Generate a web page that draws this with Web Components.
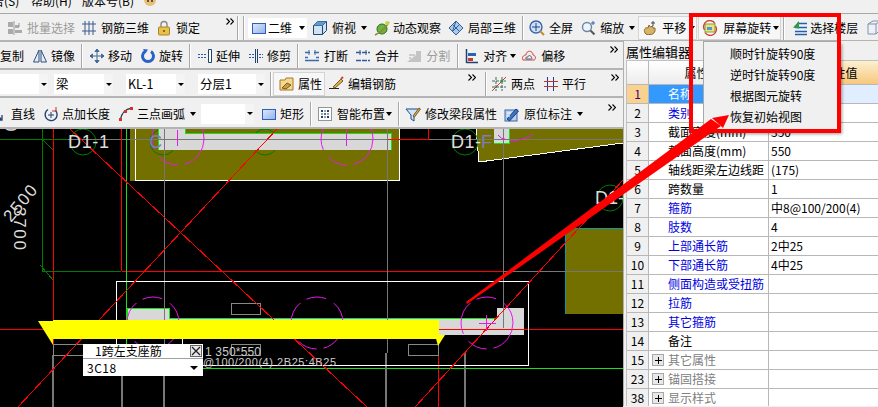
<!DOCTYPE html>
<html lang="zh">
<head>
<meta charset="utf-8">
<title>屏幕旋转</title>
<style>
  html, body { margin: 0; height: 100%; background: #f0f0f0; }
  body { font: 12px/1 "Noto Sans CJK SC", "Liberation Sans", sans-serif; color: #000; overflow: hidden; }
</style>
</head>
<body>
<app-shell>
  <menu-strip></menu-strip>
  <tool-row h="28">
    <tb-item icon="batch" ml="7" disabled>批量选择</tb-item>
    <tb-item icon="rebar3d" ml="6">钢筋三维</tb-item>
    <tb-item icon="lock" ml="7">锁定</tb-item>
    <tb-more ml="26"></tb-more>
    <tb-sep ml="3"></tb-sep>
    <tb-sep ml="4"></tb-sep>
    <tb-item icon="rect" ml="3" g="1" arrow="7" box="white" pl="3" pr="2">二维</tb-item>
    <tb-item icon="cube" ml="5" arrow="5">俯视</tb-item>
    <tb-item icon="orbit" ml="7" g="3">动态观察</tb-item>
    <tb-item icon="local3d" ml="7">局部三维</tb-item>
    <tb-sep ml="6"></tb-sep>
    <tb-item icon="full" ml="5">全屏</tb-item>
    <tb-item icon="zoom" ml="8" g="3" arrow="5">缩放</tb-item>
    <tb-item icon="pan" ml="4" arrow="3" box="frame" pl="3" pr="1">平移</tb-item>
    <tb-item icon="rotate" ml="3" g="5" arrow="2" box="frame" pl="3" pr="1">屏幕旋转</tb-item>
    <tb-sep ml="3"></tb-sep>
    <tb-item icon="floors" ml="7" g="2">选择楼层</tb-item>
    <tb-item icon="box" ml="8"></tb-item>
  </tool-row>
  <main-area>
    <left-side slot="left">
      <tool-row h="28">
        <tb-item ml="0" g="0">复制</tb-item>
        <tb-item icon="mirror" ml="8" g="3">镜像</tb-item>
        <tb-sep ml="6"></tb-sep>
        <tb-item icon="move" ml="6" g="3">移动</tb-item>
        <tb-item icon="spin" ml="8" g="3">旋转</tb-item>
        <tb-sep ml="6"></tb-sep>
        <tb-item icon="extend" ml="6" g="3">延伸</tb-item>
        <tb-item icon="trim" ml="8" g="3">修剪</tb-item>
        <tb-sep ml="6"></tb-sep>
        <tb-item icon="brk" ml="5">打断</tb-item>
        <tb-item icon="merge" ml="7">合并</tb-item>
        <tb-item icon="split" ml="7" disabled>分割</tb-item>
        <tb-sep ml="7"></tb-sep>
        <tb-item icon="align" ml="4" arrow="3">对齐</tb-item>
        <tb-item icon="offset" ml="5">偏移</tb-item>
        <tb-more ml="45"></tb-more>
      </tool-row>
      <tool-row h="28">
        <tb-combo w="48"></tb-combo>
        <tb-combo w="59" ml="6">梁</tb-combo>
        <tb-combo w="59" ml="13">KL-1</tb-combo>
        <tb-combo w="67" ml="13">分层1</tb-combo>
        <tb-sep ml="5"></tb-sep>
        <tb-item icon="attr" ml="2" g="3" box="frame" pl="5" pr="2">属性</tb-item>
        <tb-item icon="edit" ml="4">编辑钢筋</tb-item>
        <tb-more ml="72"></tb-more>
        <tb-sep ml="9"></tb-sep>
        <tb-item icon="twopt" ml="4">两点</tb-item>
        <tb-item icon="para" ml="8" g="3">平行</tb-item>
        <tb-more ml="25"></tb-more>
      </tool-row>
      <tool-row h="31">
        <tb-item icon="line" ml="-10" g="5">直线</tb-item>
        <tb-item icon="addlen" ml="8" g="3">点加长度</tb-item>
        <tb-item icon="arc" ml="8" g="3" arrow="5">三点画弧</tb-item>
        <tb-combo w="53" ml="5"></tb-combo>
        <tb-item icon="rect" ml="7" g="3">矩形</tb-item>
        <tb-sep ml="6"></tb-sep>
        <tb-item icon="smart" ml="5" arrow="1">智能布置</tb-item>
        <tb-sep ml="6"></tb-sep>
        <tb-item icon="modify" ml="5">修改梁段属性</tb-item>
        <tb-item icon="origin" ml="7" arrow="5">原位标注</tb-item>
        <tb-more ml="25"></tb-more>
      </tool-row>
      <cad-canvas>
        <cad-popup label="1跨左支座筋" value="3C18"></cad-popup>
      </cad-canvas>
    </left-side>
    <prop-panel slot="right"></prop-panel>
  </main-area>
  <screen-menu>
    <span>顺时针旋转90度</span>
    <span>逆时针旋转90度</span>
    <span>根据图元旋转</span>
    <span>恢复初始视图</span>
  </screen-menu>
  <red-notes></red-notes>
</app-shell>

<script>
// little 16x16 toolbar pictures, roughly what the real toolbar shows
const ICONS = {
  batch: `<path d="M1 2h5v5H1zM1 9h5v5H1zM8 5h4v3H8zM8 10h7v3H8z" fill="#aaa"/><path d="M7 1v14M12 3v4" stroke="#999" fill="none"/>`,
  rebar3d: `<path d="M1 4h14M1 11h14M4 1v14M8 1v14M12 1v14" stroke="#3a5a8c" fill="none"/>`,
  lock: `<path d="M5 7V4.500a3 3 0 0 1 6 0V7" fill="none" stroke="#888" stroke-width="1.400"/><rect x="2.500" y="7" width="11" height="8" rx="1" fill="#e8c04a" stroke="#a8842a"/><path d="M8 10v2" stroke="#6b5010" stroke-width="1.500"/>`,
  rect: `<defs><linearGradient id="rg" x1="0" y1="0" x2="1" y2="1"><stop offset="0" stop-color="#dfe9fb"/><stop offset="1" stop-color="#8fb2ea"/></linearGradient></defs><rect x="1.500" y="3.500" width="13" height="10" fill="url(#rg)" stroke="#2f5fb8"/>`,
  cube: `<path d="M1.500 5.500l4-4h9v9l-4 4h-9z" fill="#cfe3f5" stroke="#23466e"/><path d="M1.500 5.500h9v9M10.500 5.500l4-4" fill="none" stroke="#23466e"/><path d="M1.500 5.500l4-4h9l-4 4z" fill="#5f9ad0"/>`,
  orbit: `<circle cx="8" cy="9" r="5" fill="#6db33f" stroke="#2f6d20"/><path d="M1 15C5 13 12 8 15 2" stroke="#8a8a30" stroke-width="1.600" fill="none"/><circle cx="13" cy="3" r="2" fill="#c7d840"/>`,
  local3d: `<path d="M1 8l7-7 7 7-7 7z" fill="#a8c8ee" stroke="#33608f"/><path d="M4.500 4.500l7 7M8 1l-3.500 10.500M11.500 4.500l-7 7" stroke="#33608f" fill="none"/>`,
  full: `<circle cx="7" cy="7" r="6" fill="#cfe0f5" stroke="#3a64a8" stroke-width="1.400"/><path d="M7 3v8M3 7h8" stroke="#20448a"/><path d="M11 11l4 4" stroke="#c88a2a" stroke-width="2"/>`,
  zoom: `<circle cx="6" cy="7" r="4.500" fill="#eef4fb" stroke="#6f86a3" stroke-width="1.400"/><path d="M9.500 10.500l4 4" stroke="#555" stroke-width="2"/><path d="M12 1v4M10 3h4" stroke="#3a64a8"/>`,
  pan: `<path d="M3 13C1 9 4 7 6 8l1-3 1.500 2 2-1 .5 2 2 0 0 3c-1 3-3 3.500-5 3.500S4 15 3 13z" fill="#d6b26a" stroke="#8a6a2a"/><path d="M11 1v5M9 3h4" stroke="#3a4a6a"/>`,
  rotate: `<rect x="3" y="4" width="10" height="8" fill="#f3e07c" stroke="#6aa84a"/><rect x="5" y="7" width="5" height="3" fill="#4f9ad6"/><path d="M2.500 10A6 6 0 0 1 13 3.500M13.500 6A6 6 0 0 1 3 12.500" fill="none" stroke="#d8432e" stroke-width="1.400"/>`,
  floors: `<path d="M5 3.500h10M3 7.500h12M3 11.500h12M3 14.500h12" stroke="#1c62b0" stroke-width="1.600" fill="none"/><path d="M7 1L1 7.500l6 1" fill="#2e9a46"/>`,
  box: `<path d="M2 4l5-3h7v9l-4 4H2z" fill="#eef2f8" stroke="#7f93ad"/><path d="M2 4h8v10M10 4l4-3" fill="none" stroke="#7f93ad"/>`,
  mirror: `<path d="M7 2L1.500 14H7zM9 2l5.500 12H9z" fill="#e4ecf6" stroke="#2f4f80"/>`,
  move: `<path d="M8 1v14M1 8h14M8 1L6 3.500h4zM8 15l-2-2.500h4zM1 8l2.500-2v4zM15 8l-2.500-2v4z" stroke="#3f6b96" fill="#3f6b96"/>`,
  spin: `<path d="M11 3.500A5.500 5.500 0 1 1 5 3.500" fill="none" stroke="#2a62c8" stroke-width="3"/><path d="M3 1l5 .5-2.500 4z" fill="#2a62c8"/>`,
  extend: `<path d="M1 6.500h8M1 9.500h8" stroke="#2a5aa8" stroke-dasharray="2 1"/><path d="M11.500 1.500h3v13h-3z" fill="#fff" stroke="#20406e"/>`,
  trim: `<path d="M1 6.500h5M1 9.500h5M11 6.500h4M11 9.500h4" stroke="#2a5aa8" stroke-dasharray="2 1"/><path d="M7.500 1v14M9.500 1v14" stroke="#20406e"/>`,
  brk: `<path d="M1 4.500h5M10 4.500h5M1 12.500h14M1 9.500h3M12 9.500h3" stroke="#3a6aa8" stroke-width="1.600" fill="none"/><path d="M5 2v5M11 2v5" stroke="#3a6aa8"/>`,
  merge: `<path d="M1 4.500h14M1 12.500h14" stroke="#2f5aa0" stroke-dasharray="5 1" stroke-width="1.500"/><path d="M5 2v5M11 2v5" stroke="#2f5aa0"/>`,
  split: `<path d="M1 14l9-7V3h5v11z" fill="#c4c4c4"/><path d="M3 7h6M3 10h2" stroke="#aaa"/>`,
  align: `<path d="M3.500 1v14M3.500 14.500H15" stroke="#20406e" stroke-width="1.500"/><path d="M5 5h8v3H5z" fill="#2a62b8"/><path d="M5 10h5v3H5z" fill="#c83a2a"/>`,
  offset: `<path d="M2 12c-2-4 2-5 3-5 0-5 7-5 7 0 3 0 3 5 1 5z" fill="#f8e8e0" stroke="#c84a3a"/><path d="M5 11c-1-2 1-2 2-2 0-2 3-2 3 0 1 0 1 2 .5 2z" fill="none" stroke="#3a64a8"/>`,
  attr: `<path d="M1 4h5l1-2h7v12H1z" fill="#f6d98c" stroke="#a07a30"/><path d="M3 12l5-5 4 2-5 4z" fill="#c8a040" stroke="#7a5a20"/>`,
  edit: `<path d="M1 12.500h10" stroke="#222"/><path d="M5 11l8-8 2 2-8 7z" fill="#e0b050" stroke="#7a5a20"/><path d="M13 3l2-2" stroke="#c84a3a" stroke-width="2"/>`,
  twopt: `<path d="M1 15L15 1" stroke="#d8321e"/><path d="M5 1v14M11 1v14M1 5h14M1 11h14" stroke="#3a6a5a" stroke-dasharray="3 1"/><circle cx="11" cy="5" r="1.500" fill="#2e9a46"/>`,
  para: `<path d="M4.500 1v14M10.500 1v14" stroke="#1c3c9a"/><path d="M1 5.500h14M1 10.500h14" stroke="#c03030"/>`,
  line: `<path d="M1 3l11 11M12 9v5H7" fill="none" stroke="#20406e" stroke-width="1.300"/>`,
  addlen: `<path d="M12.500 4.500A6 6 0 1 1 5 3.500" fill="none" stroke="#20406e" stroke-width="1.400"/><path d="M8 6v6M5 9h6" stroke="#20406e"/><path d="M13 1v4h-4" fill="none" stroke="#c03030"/>`,
  arc: `<path d="M2 15C3 8 7 3 14 2" fill="none" stroke="#20406e" stroke-width="1.400"/><rect x="1" y="12" width="3" height="3" fill="#d8321e"/><rect x="6" y="4" width="3" height="3" fill="#d8321e"/><rect x="12" y="1" width="3" height="3" fill="#d8321e"/>`,
  smart: `<rect x="1.500" y="1.500" width="13" height="13" fill="#fff" stroke="#333" stroke-dasharray="1 1"/><path d="M8 4v8M4 8h8" stroke="#20406e" stroke-dasharray="2 1"/><path d="M4 4h2v2H4zM10 4h2v2h-2zM4 10h2v2H4zM10 10h2v2h-2z" fill="#20406e"/>`,
  modify: `<path d="M1 3h14L9 9v6l-3-2V9z" fill="#cfe6f6" stroke="#1c4a8a"/><path d="M8 10l6-8 1.500 1-6 8z" fill="#e0b050" stroke="#7a5a20"/>`,
  origin: `<rect x="1" y="4" width="12" height="11" fill="#b8d0ee" stroke="#3a64a8"/><path d="M3 13l9-10 2.500 2-9 10z" fill="#3a74c8" stroke="#20406e"/><path d="M3 7h4M3 10h3" stroke="#fff"/>`
};

class AppShell extends HTMLElement {
  constructor() {
    super();
    this.attachShadow({ mode: 'open' }).innerHTML = `
      <style>
        :host { display: flex; flex-direction: column; position: relative; width: 878px; height: 407px; overflow: hidden; background: #f0f0f0; }
      </style>
      <slot></slot>`;
  }
}

class MenuStrip extends HTMLElement {
  constructor() {
    super();
    this.attachShadow({ mode: 'open' }).innerHTML = `
      <style>
        :host { display: block; height: 14px; flex: none; overflow: hidden; box-sizing: border-box; border-bottom: 1px solid #a8a8a8; }
        .in { display: flex; align-items: center; height: 13px; margin-top: -7px; padding-top: 1px; font-size: 12px; }
        span { flex: none; white-space: nowrap; }
        svg { flex: none; margin-left: 9px; }
      </style>
      <div class="in">
        <span style="width:28px;margin-left:-8px">告(S)</span><span style="margin-left:11px;width:42px">帮助(H)</span><span style="margin-left:9px;width:51px">版本号(B)</span>
        <svg width="16" height="16" viewBox="0 0 16 16" style="margin-top:-5px"><circle cx="8" cy="10" r="6" fill="#e8c078"/><path d="M2 8c0-6 12-6 12 0z" fill="#d8a020"/><circle cx="6" cy="11" r="1" fill="#333"/><circle cx="10" cy="11" r="1" fill="#333"/></svg>
      </div>`;
  }
}

class ToolRow extends HTMLElement {
  constructor() {
    super();
    const h = this.getAttribute('h') || 28;
    this.attachShadow({ mode: 'open' }).innerHTML = `
      <style>
        :host { display: flex; flex: none; align-items: center; height: ${h}px; box-sizing: border-box; overflow: hidden; padding-top: 2px;
                border-bottom: 2px solid #b4b4b4; background: #f0f0f0; }
      </style>
      <slot></slot>`;
  }
}

class TbItem extends HTMLElement {
  constructor() {
    super();
    const a = n => this.getAttribute(n);
    const pic = a('icon') ? `<svg width="16" height="16" viewBox="0 0 16 16">${ICONS[a('icon')]}</svg>` : '';
    const g = a('g') !== null ? a('g') : 4;
    const boxStyle = a('box') === 'white' ? 'background:#fff;height:20px;'
      : a('box') === 'frame' ? 'background:#f7f7f7;border:1px solid #d4d4d4;margin:0 -1px;height:22px;' : '';
    this.attachShadow({ mode: 'open' }).innerHTML = `
      <style>
        :host { display: flex; flex: none; align-items: center; margin-left: ${a('ml') || 0}px; white-space: nowrap; }
        :host([disabled]) { color: #9c9c9c; }
        .b { display: flex; align-items: center; padding: 0 ${a('pr') || 0}px 0 ${a('pl') || 0}px; ${boxStyle} }
        svg { display: block; flex: none; }
        .t { margin-left: ${g}px; }
        .t:empty { display: none; }
        i { display: block; width: 0; height: 0; border: 3.500px solid transparent; border-top: 4px solid #000; border-bottom: 0; margin-left: ${a('arrow')}px; }
      </style>
      <div class="b">${pic}<span class="t"><slot></slot></span>${a('arrow') !== null ? '<i></i>' : ''}</div>`;
  }
}

class TbSep extends HTMLElement {
  constructor() {
    super();
    this.attachShadow({ mode: 'open' }).innerHTML = `
      <style>
        :host { display: block; flex: none; width: 2px; height: 24px; box-sizing: border-box; margin-left: ${this.getAttribute('ml') || 0}px;
                border-left: 1px solid #a8a8a8; border-right: 1px solid #fff; }
      </style>`;
  }
}

class TbMore extends HTMLElement {
  constructor() {
    super();
    this.attachShadow({ mode: 'open' }).innerHTML = `
      <style>
        :host { display: block; flex: none; width: 8px; height: 24px; margin-left: ${this.getAttribute('ml') || 0}px; }
        svg { display: block; margin-top: 2px; }
      </style>
      <svg width="8" height="7" viewBox="0 0 8 7"><path d="M0.500 0.500l3 3-3 3M4.500 0.500l3 3-3 3" fill="none" stroke="#000" stroke-width="1.100"/></svg>`;
  }
}

class TbCombo extends HTMLElement {
  constructor() {
    super();
    this.attachShadow({ mode: 'open' }).innerHTML = `
      <style>
        :host { display: flex; flex: none; align-items: center; box-sizing: border-box; width: ${this.getAttribute('w')}px; height: 20px;
                margin-left: ${this.getAttribute('ml') || 0}px; background: #fff; padding-left: 2px; }
        .t { flex: 1; font-size: 12.500px; }
        .a { display: flex; align-items: center; justify-content: center; width: 9px; height: 100%; background: #f4f4f4; }
        i { width: 0; height: 0; border: 3px solid transparent; border-top: 3px solid #000; border-bottom: 0; }
      </style>
      <span class="t"><slot></slot></span><span class="a"><i></i></span>`;
  }
}

class MainArea extends HTMLElement {
  constructor() {
    super();
    this.attachShadow({ mode: 'open' }).innerHTML = `
      <style>
        :host { display: flex; flex: 1; min-height: 0; }
        ::slotted([slot=left]) { width: 623px; flex: none; }
        ::slotted([slot=right]) { flex: 1; min-width: 0; }
      </style>
      <slot name="left"></slot><slot name="right"></slot>`;
  }
}

class LeftSide extends HTMLElement {
  constructor() {
    super();
    this.attachShadow({ mode: 'open' }).innerHTML = `
      <style>:host { display: flex; flex-direction: column; overflow: hidden; }</style>
      <slot></slot>`;
  }
}

class CadCanvas extends HTMLElement {
  constructor() {
    super();
    // page coordinates are kept in the viewBox so the drawing can be read off the screenshot
    this.attachShadow({ mode: 'open' }).innerHTML = `
      <style>
        :host { display: block; position: relative; flex: none; width: 623px; height: 278px; background: #000; overflow: hidden; }
        svg { display: block; }
        text { font-family: "Liberation Sans", sans-serif; }
      </style>
      <svg width="623" height="278" viewBox="0 129 623 278">
        <g shape-rendering="crispEdges">
          <!-- olive slabs -->
          <rect x="130" y="129" width="269" height="52" fill="#737000"/>
          <polygon points="476,129 479,162 623,143 623,129" fill="#737000"/>
          <rect x="565" y="228" width="58" height="86" fill="#737000"/>
          <path d="M565.500 314V228.500H623" fill="none" stroke="#0a9ab0"/>
          <path d="M135.500 129V180.500H399.500V129" fill="none" stroke="#fff"/>
          <path d="M476 129l3 33 144-19" fill="none" stroke="#fff"/>
        </g>

        <!-- column marks, the beams lie over them -->
        <g fill="none" stroke="#007a00">
          <circle cx="83" cy="142" r="13"/>
          <circle cx="163" cy="142" r="13"/>
          <circle cx="265" cy="142" r="13"/>
          <circle cx="465" cy="142" r="13"/>
          <circle cx="610" cy="198" r="13"/>
        </g>

        <g shape-rendering="crispEdges">
          <!-- light beams -->
          <path d="M158 129H185V133H392V150H158z" fill="#d8d8d8"/>
          <path d="M158.500 129V150M185.500 129V133.500H391.500V150" fill="none" stroke="#18e018"/>
          <rect x="494" y="129" width="16" height="15" fill="#d8d8d8"/>
          <path d="M494 143.500H509.500V129" fill="none" stroke="#18e018"/>
          <path d="M127 308H169V319H497V308H524V335H127z" fill="#d8d8d8"/>
          <path d="M127.500 335V308.500H169.500V318.500H497" fill="none" stroke="#18e018"/>

          <!-- grid lines -->
          <path d="M0 139.500H68M42.500 129V271M42 271.500H121" stroke="#007a00" fill="none"/>
          <path d="M68 139.500H623" stroke="#777" fill="none"/>
          <path d="M53.500 129V345M121.500 129V271M122 271.500H503M428.500 129V139.500H387M0 329.500H53M439 329.500H623M438.500 340V407" stroke="#f00" fill="none"/>
          <path d="M126.500 129V345" stroke="#18e018" fill="none"/>
          <path d="M164.500 129V376M387.500 129V353M503.500 129V328M503 271.500H623" stroke="#777" fill="none"/>
          <path d="M203 368.500H623" stroke="#18e018" fill="none"/>
          <path d="M53 355V407M122 376V407M164 376V407M386 353V407M465 353V407" stroke="#777" stroke-width="2" fill="none"/>
          <path d="M182.500 339V344" stroke="#fff"/>

          <!-- column outline and small boxes -->
          <rect x="116.500" y="281.500" width="412" height="84" fill="none" stroke="#fff"/>
          <g fill="none" stroke="#888">
            <rect x="231.500" y="303.500" width="29" height="11"/>
            <rect x="231.500" y="344.500" width="29" height="11"/>
            <rect x="53.500" y="344.500" width="30" height="11"/>
            <rect x="408.500" y="344.500" width="30" height="11"/>
          </g>
        </g>

        <!-- diagonals -->
        <g stroke="#f00" fill="none" shape-rendering="crispEdges">
          <path d="M70 129L367 407M277 129L18 407M623 180L415 407"/>
        </g>
        <path d="M42 139l11 11M40 265l14 16" stroke="#007a00" fill="none" shape-rendering="crispEdges"/>

        <!-- dashed bars circles -->
        <g fill="none" stroke="#e818e8" stroke-dasharray="34 7 20 9">
          <circle cx="178" cy="139" r="26"/>
          <circle cx="347" cy="139" r="26"/>
          <circle cx="153" cy="323" r="26"/>
          <circle cx="317" cy="323" r="26"/>
          <circle cx="487" cy="323" r="26"/>
        </g>
        <path d="M498 135c3 3 4 4 7 4M510 141c8 0 16-2 23-7" fill="none" stroke="#e818e8"/>
        <path d="M177.500 130v16M346.500 130v16M479 323.500h17M486.500 315v16" stroke="#e818e8" shape-rendering="crispEdges"/>

        <g fill="#ddd" font-size="18">
          <text x="68" y="148" textLength="41">D1-1</text>
          <text x="451" y="148" textLength="30">D1-</text>
          <text x="595" y="204">D1-</text>
        </g>
        <g fill="#7d7db8" font-size="18">
          <text x="149" y="148">C</text>
          <text x="481" y="148">F</text>
        </g>
        <text transform="translate(11,223) rotate(-50)" fill="#ddd" font-size="17" textLength="42">2500</text>
        <text transform="translate(14,207) rotate(90)" fill="#ddd" font-size="17" textLength="43">3700</text>
        <text transform="translate(5,122) rotate(90)" fill="#ddd" font-size="17">0</text>
        <text x="205" y="356" fill="#ccc" font-size="12" textLength="56">1 350*550</text>
        <text x="203" y="365.500" fill="#ccc" font-size="11" textLength="133">@100/200(4) 2B25:4B25</text>

        <!-- selected span in yellow -->
        <g fill="#ff0" shape-rendering="crispEdges">
          <rect x="53" y="320" width="386" height="19"/>
        </g>
        <polygon points="38,321 53,321 53,345" fill="#ff0"/>
        <polygon points="435,335 445,335 438,346" fill="#ff0"/>
      </svg>
      <slot></slot>`;
  }
}

class CadPopup extends HTMLElement {
  constructor() {
    super();
    this.attachShadow({ mode: 'open' }).innerHTML = `
      <style>
        :host { display: block; position: absolute; left: 83px; top: 215px; width: 120px; height: 32px; background: #fff; color: #000; font-size: 12px; }
        .top { display: flex; align-items: center; height: 15px; box-sizing: border-box; border-bottom: 1px solid #a0a0a0; }
        .top span { flex: 1; padding-left: 12px; }
        .x { width: 10px; height: 10px; border: 1px solid #666; background: #e8e8e8; margin-right: 1px; }
        .x svg { display: block; }
        .low { display: flex; align-items: center; height: 17px; padding-left: 4px; }
        .low span { flex: 1; letter-spacing: .5px; }
        i { width: 0; height: 0; border: 4px solid transparent; border-top: 4px solid #000; border-bottom: 0; margin-right: 5px; }
      </style>
      <div class="top"><span>${this.getAttribute('label')}</span>
        <div class="x"><svg width="10" height="10" viewBox="0 0 10 10"><path d="M1 1l8 8M9 1l-8 8" stroke="#222" stroke-width="1.300"/></svg></div></div>
      <div class="low"><span>${this.getAttribute('value')}</span><i></i></div>`;
  }
}

class PropPanel extends HTMLElement {
  constructor() {
    super();
    const blue = '#0000e0', grey = '#808080';
    const rows = [
      ['1', '名称', 'KL-1', 'sel'],
      ['2', '类别', '楼层框架梁', blue],
      ['3', '截面宽度(mm)', '350'],
      ['4', '截面高度(mm)', '550'],
      ['5', '轴线距梁左边线距', '(175)'],
      ['6', '跨数量', '1'],
      ['7', '箍筋', '中8@100/200(4)', blue],
      ['8', '肢数', '4', blue],
      ['9', '上部通长筋', '2中25', blue],
      ['10', '下部通长筋', '4中25', blue],
      ['11', '侧面构造或受扭筋', '', blue],
      ['12', '拉筋', '', blue],
      ['13', '其它箍筋', '', blue],
      ['14', '备注', ''],
      ['15', '其它属性', '', grey, 1],
      ['23', '锚固搭接', '', grey, 1],
      ['38', '显示样式', '', grey, 1]
    ];
    const body = rows.map(([n, name, val, c, plus]) => {
      const sel = c === 'sel';
      const valueColor = n === '2' ? '' : 'color:#000';
      return `<tr class="${sel ? 'sel' : ''}">
        <th>${n}</th>
        <td class="n" style="${c && !sel ? `color:${c}` : ''}">${plus ? '<b></b>' : ''}${name}</td>
        <td class="v" style="${valueColor}">${val}</td></tr>`;
    }).join('');
    this.attachShadow({ mode: 'open' }).innerHTML = `
      <style>
        :host { display: block; box-sizing: border-box; height: 100%; overflow: hidden; background: #f0f0f0; border-left: 1px solid #b0b0b0; padding-left: 2px; margin-top: -1px; }
        .title { height: 19px; padding-top: 4px; box-sizing: border-box; font-size: 13px; background: #f0f0f0; white-space: nowrap; }
        table { border-collapse: separate; border-spacing: 0; table-layout: fixed; width: 284px; background: #fff; font-size: 12px; border-top: 1px solid #c0c0c0; border-left: 1px solid #c0c0c0; }
        th, td { height: 18px; padding: 0; border-right: 1px solid #b8b8b8; border-bottom: 1px solid #b8b8b8; white-space: nowrap; overflow: hidden; font-weight: 400; }
        thead th { height: 23px; background: linear-gradient(#fff, #ececec); text-align: center; }
        thead th.hot { background: linear-gradient(#fdf0d0, #f6c87c); }
        tbody th { background: #f0f0f0; text-align: center; }
        .n { padding-left: 19px; position: relative; }
        .v { padding-left: 2px; }
        .sel th { background: #fad28f; color: #400080; }
        .sel .n { background: #3399ff; color: #fff; }
        .sel .v { background: #e0eeff; }
        b { position: absolute; left: 3px; top: 3px; width: 10px; height: 10px; border: 1px solid #a8a8a8; background:
            linear-gradient(#000, #000) center / 7px 1px no-repeat, linear-gradient(#000, #000) center / 1px 7px no-repeat, #e8e8e8; }
      </style>
      <div class="title">属性编辑器</div>
      <table>
        <colgroup><col style="width:22px"><col style="width:120px"><col style="width:142px"></colgroup>
        <thead><tr><th></th><th>属性名称</th><th class="hot">属性值</th></tr></thead>
        <tbody>${body}</tbody>
      </table>`;
  }
}

class ScreenMenu extends HTMLElement {
  constructor() {
    super();
    this.attachShadow({ mode: 'open' }).innerHTML = `
      <style>
        :host { display: flex; flex-direction: column; position: absolute; left: 703px; top: 41px; width: 136px; height: 90px; box-sizing: border-box;
                padding-top: 1px; background: #f0f0f0; border: 1px solid #a8a8a8; box-shadow: 3px 3px 3px rgba(0,0,0,.4); font-size: 12px; }
        ::slotted(span) { display: flex; align-items: center; height: 21px; padding-left: 26px; white-space: nowrap; }
      </style>
      <slot></slot>`;
  }
}

class RedNotes extends HTMLElement {
  constructor() {
    super();
    this.attachShadow({ mode: 'open' }).innerHTML = `
      <style>
        :host { display: block; position: absolute; left: 0; top: 0; width: 878px; height: 407px; pointer-events: none; }
        svg { display: block; }
      </style>
      <svg width="878" height="407" viewBox="0 0 878 407">
        <rect x="691" y="15" width="148" height="116" fill="none" stroke="#f00" stroke-width="4"/>
        <polygon points="466,302 711,119 721,126 467,304" fill="#f00"/>
        <polygon points="729,115 712,118 723,128" fill="#f00"/>
      </svg>`;
  }
}

customElements.define('app-shell', AppShell);
customElements.define('menu-strip', MenuStrip);
customElements.define('tool-row', ToolRow);
customElements.define('tb-item', TbItem);
customElements.define('tb-sep', TbSep);
customElements.define('tb-more', TbMore);
customElements.define('tb-combo', TbCombo);
customElements.define('main-area', MainArea);
customElements.define('left-side', LeftSide);
customElements.define('cad-canvas', CadCanvas);
customElements.define('cad-popup', CadPopup);
customElements.define('prop-panel', PropPanel);
customElements.define('screen-menu', ScreenMenu);
customElements.define('red-notes', RedNotes);
</script>
</body>
</html>
